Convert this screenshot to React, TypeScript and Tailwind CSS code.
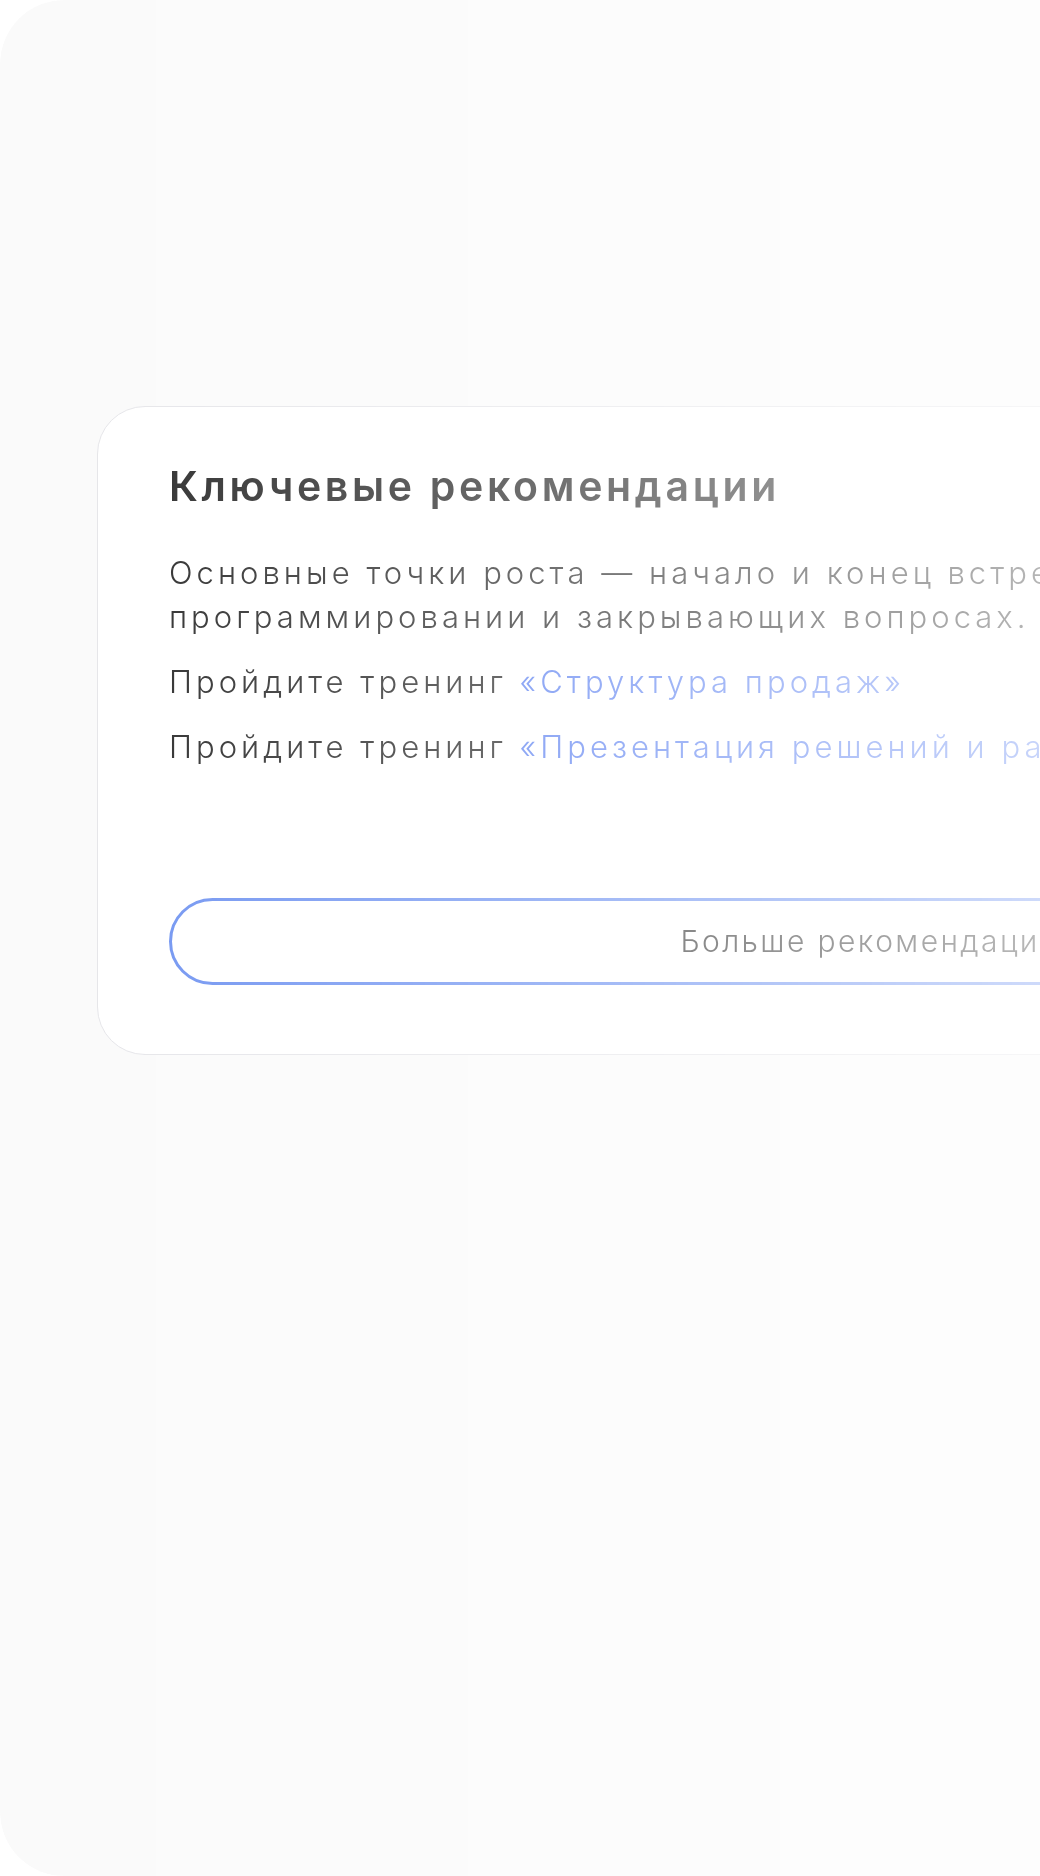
import * as React from 'react'

const App: React.FunctionComponent = () => {
    return (
        <div className="w-full h-[1876px] bg-white overflow-hidden font-['Inter','Noto_Sans',sans-serif]">
            {/* Panel fades out to the right */}
            <div className="w-[1800px] h-[1876px] bg-[#fafafa] rounded-l-[64px] pt-[406px] pl-[97px] [mask-image:linear-gradient(to_right,#000_0px,transparent_1560px)]">
                <div className="w-[1546px] h-[649px] bg-white border border-[#e4e4e8] rounded-[48px] pt-[55px] px-[71px] flex flex-col">
                    <h2 className="text-[41px] leading-[49px] font-semibold text-[#222222] tracking-[0.09em]">Ключевые рекомендации</h2>
                    <div className="mt-[40px] flex flex-col gap-[21px] text-[31px] leading-[44px] font-light text-[#222222] tracking-[0.13em]">
                        <p className="whitespace-nowrap">
                            Основные точки роста — начало и конец встречи: больше внимания
                            <br />
                            программировании и закрывающих вопросах.
                        </p>
                        <p>
                            Пройдите тренинг <span className="text-[#577df0]">«Структура продаж»</span>
                        </p>
                        <p className="whitespace-nowrap">
                            Пройдите тренинг <span className="text-[#577df0]">«Презентация решений и работа с возражениями»</span>
                        </p>
                    </div>
                    <button className="mt-[129px] h-[87px] w-full rounded-full border-[3px] border-[#6a8ff0] bg-white text-[30px] font-light text-[#2b2b2b] tracking-[0.08em]">
                        Больше рекомендаций
                    </button>
                </div>
            </div>
        </div>
    )
}

export default App
